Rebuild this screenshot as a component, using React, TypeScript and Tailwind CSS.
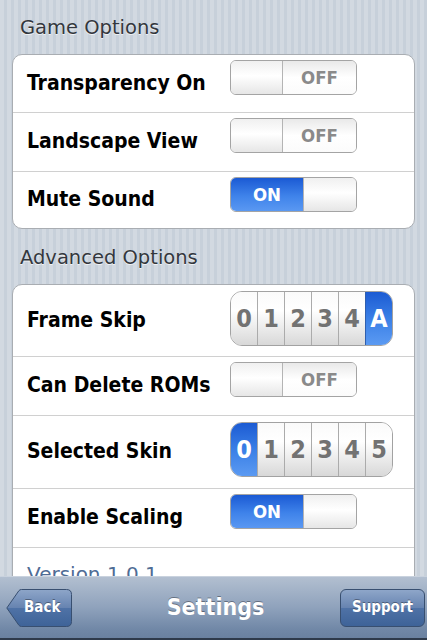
import React from "react";

const FONT = "font-['DejaVu_Sans_Condensed','DejaVu_Sans',sans-serif]";

function Switch({ on }: { on: boolean }) {
  return (
    <div className="mt-[5px] flex h-[35px] w-[127px] self-start overflow-hidden rounded-[6px] border border-[#a4a4a4]">
      {on ? (
        <>
          <div className="flex w-[73px] items-center justify-center bg-[linear-gradient(#1b5ad4,#3f83ea_55%,#5a98f2)] text-[18.5px] font-bold text-white">
            ON
          </div>
          <div className="w-[54px] border-l border-[#b4b4b4] bg-[linear-gradient(#f0f0f0,#ffffff_45%,#e6e6e6)]" />
        </>
      ) : (
        <>
          <div className="w-[52px] border-r border-[#b4b4b4] bg-[linear-gradient(#f0f0f0,#ffffff_45%,#e6e6e6)]" />
          <div className="flex flex-1 items-center justify-center bg-[linear-gradient(#e9e9e9,#ffffff_50%,#fbfbfb)] text-[18.5px] font-bold text-[#8a8a8a]">
            OFF
          </div>
        </>
      )}
    </div>
  );
}

function Segments({ items, selected }: { items: string[]; selected: number }) {
  return (
    <div className="mt-[6px] flex h-[55px] w-[163px] self-start overflow-hidden rounded-[12px] border border-[#a2a2a2]">
      {items.map((it, i) => (
        <div
          key={it}
          className={
            i === selected
              ? "flex flex-1 items-center justify-center border-l border-[#2f5fae] bg-[linear-gradient(#1c5bd3,#3a7fe6_50%,#5b9af2)] text-[25px] font-bold text-white first:border-l-0"
              : "flex flex-1 items-center justify-center border-l border-[#ababab] bg-[linear-gradient(#fafafa,#ffffff_35%,#d8d8d8)] text-[25px] font-bold text-[#727272] first:border-l-0"
          }
        >
          {it}
        </div>
      ))}
    </div>
  );
}

function Row({ label, h, children }: { label: string; h: string; children?: React.ReactNode }) {
  return (
    <div className={`flex items-center pl-[14px] ${h}`}>
      <div className="w-[203px] text-[21px] font-bold text-black">{label}</div>
      {children}
    </div>
  );
}

function Divider() {
  return <div className="h-px bg-[#d0d0d0]" />;
}

export default function App() {
  return (
    <div className={`flex h-[640px] w-[427px] flex-col overflow-hidden ${FONT}`}>
      {/* content, scrolled */}
      <div className="h-[576px] overflow-hidden bg-[repeating-linear-gradient(90deg,#d2d9e1_0px,#d2d9e1_4px,#c7d0da_4px,#c7d0da_7px)] px-[12px]">
        <div className="pl-[8px] pt-[16px] pb-[14px] font-['DejaVu_Sans',sans-serif] text-[19.5px] leading-[24px] text-[#33373d] [text-shadow:0_1px_0_rgba(255,255,255,0.7)]">
          Game Options
        </div>
        <div className="overflow-hidden rounded-[10px] border border-[#a9adb2] bg-white">
          <Row label="Transparency On" h="h-[57px]">
            <Switch on={false} />
          </Row>
          <Divider />
          <Row label="Landscape View" h="h-[58px]">
            <Switch on={false} />
          </Row>
          <Divider />
          <Row label="Mute Sound" h="h-[56px]">
            <Switch on={true} />
          </Row>
        </div>

        <div className="pl-[8px] pt-[17px] pb-[14px] font-['DejaVu_Sans',sans-serif] text-[19.5px] leading-[24px] text-[#33373d] [text-shadow:0_1px_0_rgba(255,255,255,0.7)]">
          Advanced Options
        </div>
        <div className="overflow-hidden rounded-[10px] border border-[#a9adb2] bg-white">
          <Row label="Frame Skip" h="h-[71px]">
            <Segments items={["0", "1", "2", "3", "4", "A"]} selected={5} />
          </Row>
          <Divider />
          <Row label="Can Delete ROMs" h="h-[58px]">
            <Switch on={false} />
          </Row>
          <Divider />
          <Row label="Selected Skin" h="h-[72px]">
            <Segments items={["0", "1", "2", "3", "4", "5"]} selected={0} />
          </Row>
          <Divider />
          <Row label="Enable Scaling" h="h-[58px]">
            <Switch on={true} />
          </Row>
          <Divider />
          <div className="h-[60px] pl-[14px] pt-[14px] font-['DejaVu_Sans',sans-serif] text-[20px] leading-[24px] text-[#4f6c95]">
            Version 1.0.1
          </div>
        </div>
      </div>

      {/* bottom bar */}
      <div className="grid h-[64px] grid-cols-[1fr_auto_1fr] items-center border-t border-[#c9d2de] border-b-2 border-b-[#2e3a4b] bg-[linear-gradient(#b2bfd0,#8fa2bc_50%,#7188a7_85%,#6a81a0)] pl-[6px] pr-[2px]">
        <div className="relative flex h-[38px] w-[66px] items-center justify-self-start">
          <svg className="absolute inset-0" width="66" height="38" viewBox="0 0 66 38">
            <defs>
              <linearGradient id="bk" x1="0" y1="0" x2="0" y2="1">
                <stop offset="0" stopColor="#8ea6c9" />
                <stop offset="0.5" stopColor="#6683b0" />
                <stop offset="0.51" stopColor="#4f72a6" />
                <stop offset="1" stopColor="#3e6398" />
              </linearGradient>
            </defs>
            <path
              d="M0.8 19 L12.8 1.8 Q13.8 0.5 15.5 0.5 H60.5 Q65.5 0.5 65.5 5.5 V32.5 Q65.5 37.5 60.5 37.5 H15.5 Q13.8 37.5 12.8 36.2 Z"
              fill="url(#bk)"
              stroke="#384f70"
            />
          </svg>
          <span className="relative ml-[18px] text-[15px] font-bold text-white [text-shadow:0_-1px_0_rgba(0,0,0,0.35)]">
            Back
          </span>
        </div>
        <div className="text-[23px] font-bold text-white [text-shadow:0_-1px_0_rgba(0,0,0,0.35)]">Settings</div>
        <div className="flex h-[38px] w-[85px] items-center justify-center justify-self-end rounded-[6px] border border-[#384f70] bg-[linear-gradient(#8ea6c9,#6683b0_50%,#4f72a6_51%,#3e6398)] text-[15px] font-bold text-white [text-shadow:0_-1px_0_rgba(0,0,0,0.35)]">
          Support
        </div>
      </div>
    </div>
  );
}
